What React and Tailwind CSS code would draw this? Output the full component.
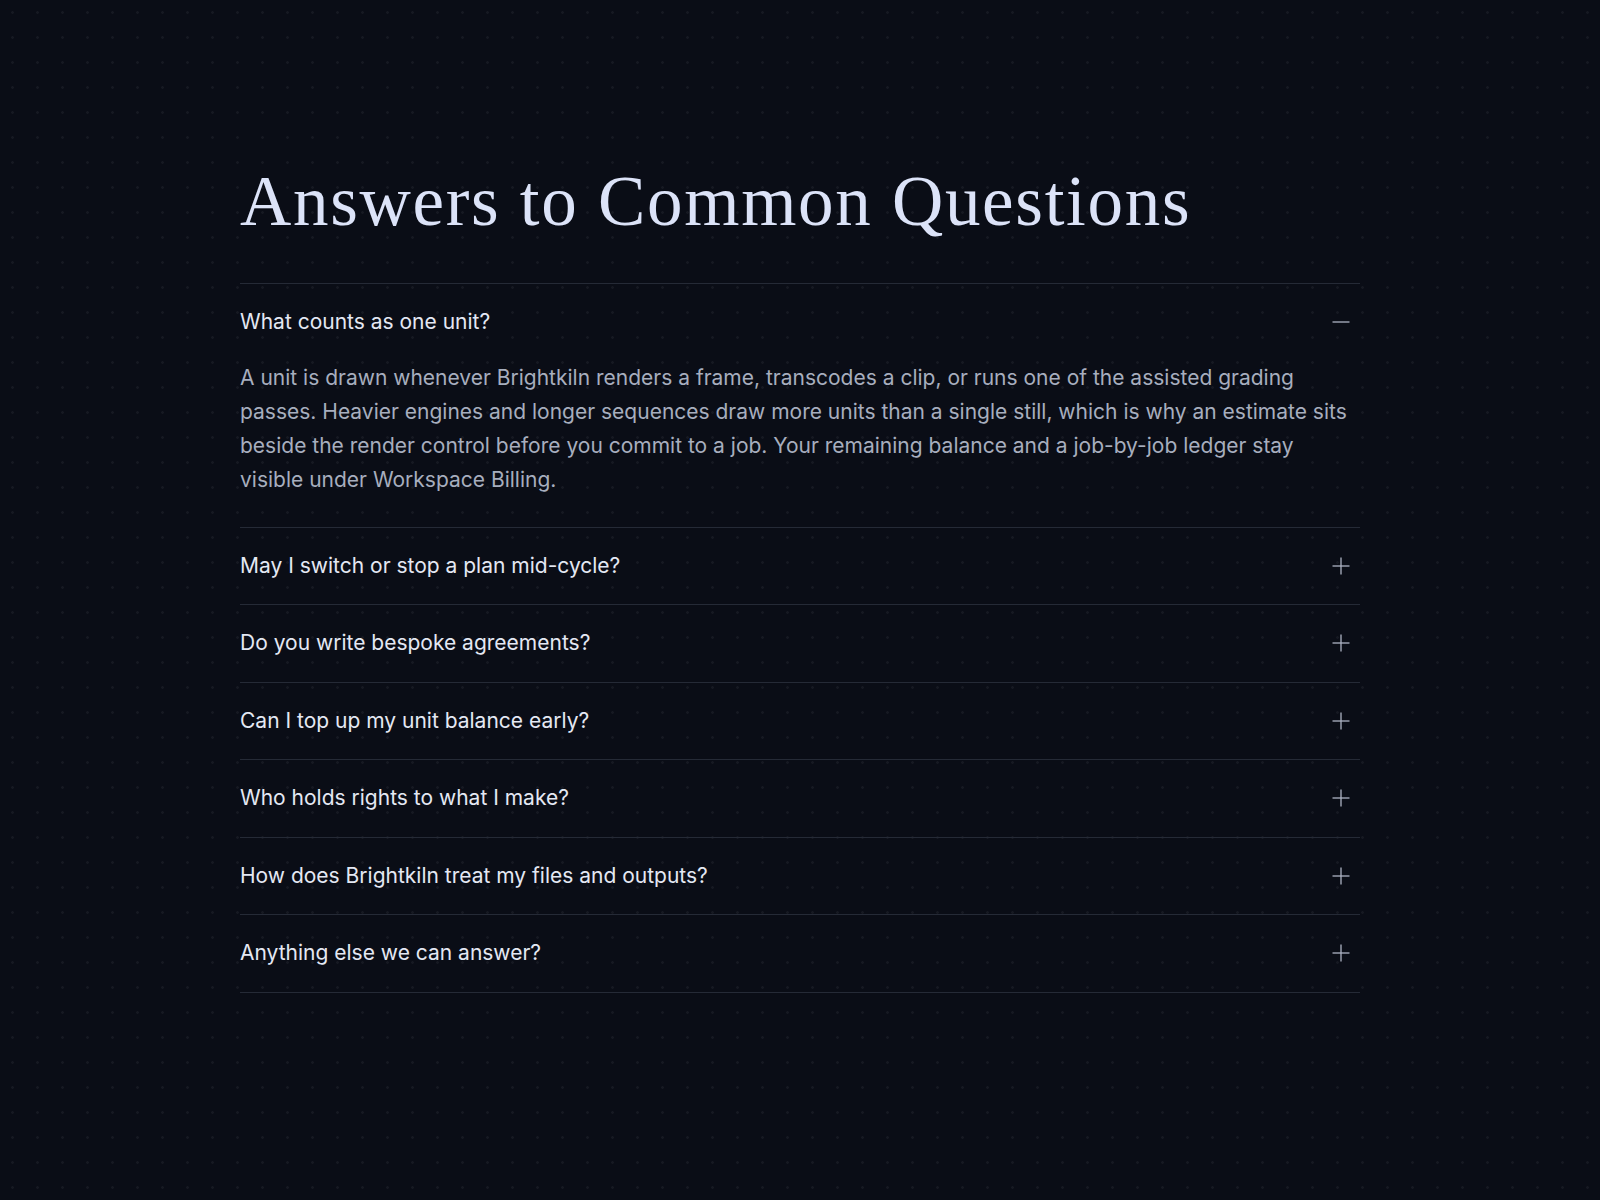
import { useState } from "react";

const faqs = [
  {
    q: "What counts as one unit?",
    a: "A unit is drawn whenever Brightkiln renders a frame, transcodes a clip, or runs one of the assisted grading passes. Heavier engines and longer sequences draw more units than a single still, which is why an estimate sits beside the render control before you commit to a job. Your remaining balance and a job-by-job ledger stay visible under Workspace Billing.",
  },
  {
    q: "May I switch or stop a plan mid-cycle?",
    a: "Yes. Changes take effect at once and any unused time is credited back to your workspace.",
  },
  {
    q: "Do you write bespoke agreements?",
    a: "For studios with larger teams we can draft terms, invoicing and support levels to suit.",
  },
  {
    q: "Can I top up my unit balance early?",
    a: "Top-ups can be bought at any point and never expire while your plan is active.",
  },
  {
    q: "Who holds rights to what I make?",
    a: "You do. Everything rendered in your workspace belongs to you and your collaborators.",
  },
  {
    q: "How does Brightkiln treat my files and outputs?",
    a: "Files are encrypted at rest and are never used to train models without your consent.",
  },
  {
    q: "Anything else we can answer?",
    a: "Write to the team from the help panel and someone will reply within a working day.",
  },
];

function ToggleIcon({ open }) {
  return (
    <svg width="18" height="18" viewBox="0 0 18 18" className="shrink-0 text-[#aeb4c4]">
      <path d="M0.5 9h17" stroke="currentColor" strokeWidth="1.3" />
      {!open && <path d="M9 0.5v17" stroke="currentColor" strokeWidth="1.3" />}
    </svg>
  );
}

export default function App() {
  const [openIndex, setOpenIndex] = useState(0);

  return (
    <div className="min-h-screen bg-[#0a0d16] bg-[radial-gradient(circle,rgba(255,255,255,0.05)_1px,transparent_1.6px)] bg-[length:25px_25px] font-['Inter','Noto_Sans',sans-serif]">
      <div className="mx-auto w-[1120px] pt-[166px] pb-40">
        <h1 className="mb-[46px] font-['Liberation_Serif',serif] text-[71px] leading-none tracking-[0.024em] text-[#dce3f8]">
          Answers to Common Questions
        </h1>

        <div className="border-t border-[#252a36]">
          {faqs.map((item, i) => {
            const open = openIndex === i;
            return (
              <div key={item.q} className="border-b border-[#252a36]">
                <button
                  type="button"
                  onClick={() => setOpenIndex(open ? -1 : i)}
                  className="flex w-full items-center justify-between py-6 pr-[10px] text-left"
                >
                  <span className="text-[21px] leading-[28.5px] text-[#e4e8f3]">{item.q}</span>
                  <ToggleIcon open={open} />
                </button>
                {open && (
                  <p className="pb-[30px] text-[21px] leading-[34px] text-[#a7aebe]">{item.a}</p>
                )}
              </div>
            );
          })}
        </div>
      </div>
    </div>
  );
}
